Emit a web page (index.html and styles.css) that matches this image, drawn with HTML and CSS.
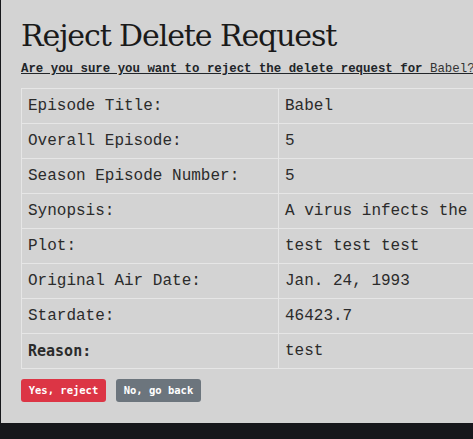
FILE: index.html
```html
<!DOCTYPE html>
<html lang="en">
<head>
<meta charset="utf-8">
<title>Reject Delete Request</title>
<link rel="stylesheet" href="styles.css">
</head>
<body>
<div class="panel">
  <h1 class="title">Reject Delete Request</h1>
  <p class="question"><strong>Are you sure you want to reject the delete request for </strong><span class="name">Babel?</span></p>
  <table class="details">
    <colgroup><col class="col-label"><col class="col-value"></colgroup>
    <tr><td class="label">Episode Title:</td><td>Babel</td></tr>
    <tr><td class="label">Overall Episode:</td><td>5</td></tr>
    <tr><td class="label">Season Episode Number:</td><td>5</td></tr>
    <tr><td class="label">Synopsis:</td><td>A virus infects the crew of Deep Space Nine, causing them to speak gibberish.</td></tr>
    <tr><td class="label">Plot:</td><td>test test test</td></tr>
    <tr><td class="label">Original Air Date:</td><td>Jan. 24, 1993</td></tr>
    <tr><td class="label">Stardate:</td><td>46423.7</td></tr>
    <tr><td class="label strong">Reason:</td><td>test</td></tr>
  </table>
  <div class="actions">
    <button class="btn btn-danger" type="button">Yes, reject</button>
    <button class="btn btn-secondary" type="button">No, go back</button>
  </div>
</div>
</body>
</html>
```
FILE: styles.css
```css
html, body {
  margin: 0;
  padding: 0;
  background: #16171b;
  overflow: hidden;
  width: 473px;
  height: 439px;
}
.panel {
  margin-left: 1px;
  height: 423px;
  box-sizing: border-box;
  background: #d3d3d3;
  padding: 14px 0 0 20px;
  overflow: hidden;
  color: #212529;
  font-family: "Liberation Mono", "DejaVu Sans Mono", monospace;
}
.title {
  margin: 0;
  font-family: "DejaVu Serif", serif;
  font-weight: 400;
  font-size: 30px;
  letter-spacing: -1.1px;
  line-height: 44px;
  color: #1a1a1a;
  white-space: nowrap;
}
.question {
  margin: 2px 0 0 0;
  font-size: 12.4px;
  line-height: 18px;
  text-decoration: underline;
  white-space: nowrap;
}
.question strong { font-weight: 700; }
.name { font-weight: 400; color: #333; }
.details {
  margin-top: 10px;
  border-collapse: collapse;
  table-layout: fixed;
  width: 640px;
  font-size: 16px;
  line-height: 24px;
  color: #2b2b2b;
}
.col-label { width: 257px; }
.col-value { width: 383px; }
.details td {
  border: 1px solid #e6e6e6;
  padding: 5px 6px;
  white-space: nowrap;
  overflow: hidden;
}
.details td.strong { font-family: "DejaVu Sans Mono", monospace; font-weight: 700; font-size: 15px; }
.actions {
  display: flex;
  gap: 10px;
  margin-top: 10px;
}
.btn {
  font-family: "DejaVu Sans Mono", monospace;
  font-weight: 700;
  font-size: 10.5px;
  line-height: 15px;
  padding: 4px 7px;
  border: 0;
  border-radius: 3px;
  color: #fff;
  height: 23px;
  width: 85px;
}
.btn-danger { background: #dc3545; }
.btn-secondary { background: #6c757d; }
```
